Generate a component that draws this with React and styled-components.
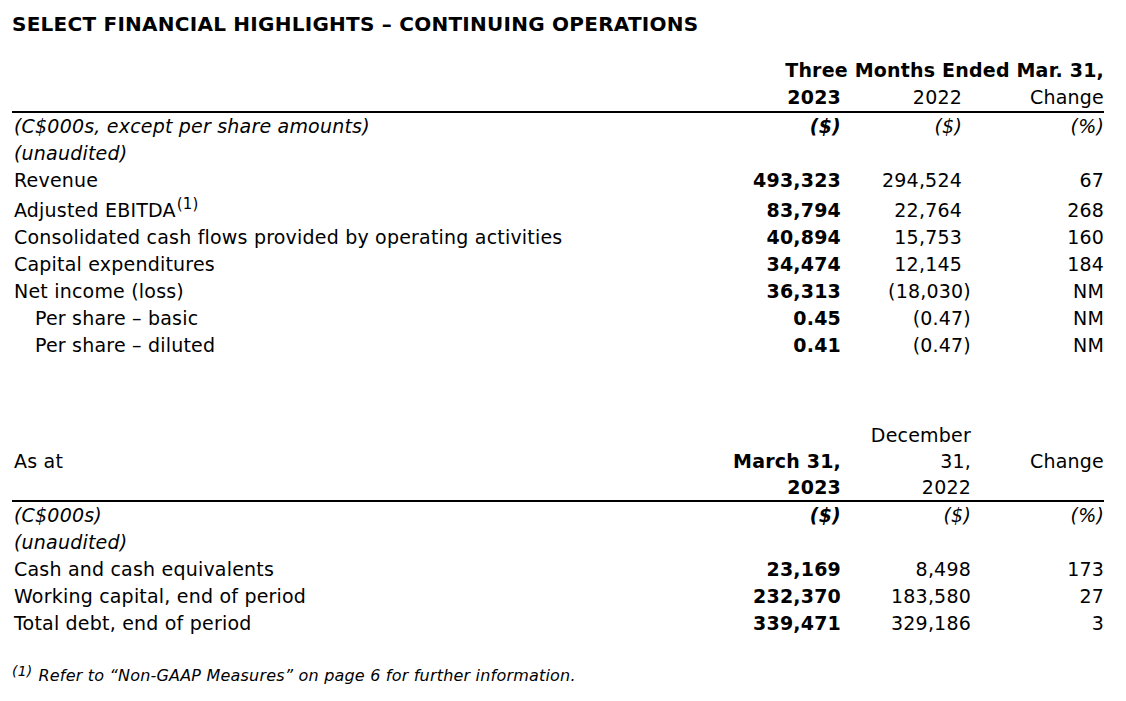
import React from 'react'
import styled, { createGlobalStyle } from 'styled-components'

const GlobalStyle = createGlobalStyle`
    body {
        margin: 0;
        background: #ffffff;
        color: #000000;
        font-family: "DejaVu Sans", Verdana, sans-serif;
    }
`

const Page = styled.div`
    width: 1126px;
    padding: 12px 22px 0 12px;
    box-sizing: border-box;
`

const Title = styled.h1`
    margin: 0;
    font-size: 20px;
    line-height: 24px;
    letter-spacing: 0.25px;
    font-weight: bold;
`

const Table = styled.table`
    width: 1092px;
    table-layout: fixed;
    border-collapse: collapse;
    font-size: 19px;
    line-height: 27px;
    letter-spacing: 0.2px;
    margin-top: ${p => p.$top}px;
`

const Cell = styled.td`
    padding: 0 ${p => (p.$hang ? 9 : 0)}px 0 ${p => (p.$indent ? 23 : 2)}px;
    text-align: ${p => (p.$num ? 'right' : 'left')};
    font-weight: ${p => (p.$bold ? 'bold' : 'normal')};
    font-style: ${p => (p.$italic ? 'italic' : 'normal')};
    vertical-align: ${p => p.$valign || 'middle'};
    white-space: nowrap;
`

const Row = styled.tr`
    height: ${p => (p.$tall ? 30 : 27)}px;
    & > td {
        vertical-align: bottom;
    }
`

const HeadRow = styled.tr`
    line-height: ${p => p.$lh || 27}px;
    & > td {
        border-bottom: ${p => (p.$rule ? '2px solid #000' : 'none')};
    }
`

const Sup = styled.sup`
    font-size: 15px;
    line-height: 0;
    vertical-align: 8px;
    margin-left: 1px;
`

const Footnote = styled.p`
    margin: 24px 0 0 0;
    font-size: 16px;
    line-height: 20px;
    letter-spacing: 0.2px;
    font-style: italic;
`

const FootMark = styled.span`
    font-size: 14px;
    vertical-align: 5px;
    margin-right: 6px;
`

const Cols = () => (
    <colgroup>
        <col style={{ width: 688 }} />
        <col style={{ width: 141 }} />
        <col style={{ width: 130 }} />
        <col style={{ width: 133 }} />
    </colgroup>
)

const quarterRows = [
    { label: 'Revenue', cur: '493,323', prev: '294,524', change: '67' },
    { label: 'Adjusted EBITDA', sup: true, cur: '83,794', prev: '22,764', change: '268' },
    { label: 'Consolidated cash flows provided by operating activities', cur: '40,894', prev: '15,753', change: '160' },
    { label: 'Capital expenditures', cur: '34,474', prev: '12,145', change: '184' },
    { label: 'Net income (loss)', cur: '36,313', prev: '(18,030)', change: 'NM' },
    { label: 'Per share – basic', indent: true, cur: '0.45', prev: '(0.47)', change: 'NM' },
    { label: 'Per share – diluted', indent: true, cur: '0.41', prev: '(0.47)', change: 'NM' },
]

const balanceRows = [
    { label: 'Cash and cash equivalents', cur: '23,169', prev: '8,498', change: '173' },
    { label: 'Working capital, end of period', cur: '232,370', prev: '183,580', change: '27' },
    { label: 'Total debt, end of period', cur: '339,471', prev: '329,186', change: '3' },
]

const App = () => {
    return (
        <Page>
            <GlobalStyle />
            <Title>SELECT FINANCIAL HIGHLIGHTS – CONTINUING OPERATIONS</Title>

            <Table $top={21}>
                <Cols />
                <tbody>
                    <tr>
                        <Cell />
                        <Cell colSpan={3} $num $bold>Three Months Ended Mar. 31,</Cell>
                    </tr>
                    <HeadRow $rule>
                        <Cell />
                        <Cell $num $bold>2023</Cell>
                        <Cell $num $hang>2022</Cell>
                        <Cell $num>Change</Cell>
                    </HeadRow>
                    <tr>
                        <Cell $italic>(C$000s, except per share amounts)</Cell>
                        <Cell $num $bold $italic>($)</Cell>
                        <Cell $num $italic $hang>($)</Cell>
                        <Cell $num $italic>(%)</Cell>
                    </tr>
                    <tr>
                        <Cell $italic>(unaudited)</Cell>
                        <Cell />
                        <Cell />
                        <Cell />
                    </tr>
                    {quarterRows.map(r => (
                        <Row key={r.label} $tall={r.sup}>
                            <Cell $indent={r.indent}>
                                {r.label}
                                {r.sup && <Sup>(1)</Sup>}
                            </Cell>
                            <Cell $num $bold>{r.cur}</Cell>
                            <Cell $num $hang={!r.prev.startsWith('(')}>{r.prev}</Cell>
                            <Cell $num>{r.change}</Cell>
                        </Row>
                    ))}
                </tbody>
            </Table>

            <Table $top={63}>
                <Cols />
                <tbody>
                    <HeadRow $rule $lh={26}>
                        <Cell>As at</Cell>
                        <Cell $num $bold $valign="bottom">March 31,<br />2023</Cell>
                        <Cell $num>December<br />31,<br />2022</Cell>
                        <Cell $num>Change</Cell>
                    </HeadRow>
                    <tr>
                        <Cell $italic>(C$000s)</Cell>
                        <Cell $num $bold $italic>($)</Cell>
                        <Cell $num $italic>($)</Cell>
                        <Cell $num $italic>(%)</Cell>
                    </tr>
                    <tr>
                        <Cell $italic>(unaudited)</Cell>
                        <Cell />
                        <Cell />
                        <Cell />
                    </tr>
                    {balanceRows.map(r => (
                        <Row key={r.label}>
                            <Cell>{r.label}</Cell>
                            <Cell $num $bold>{r.cur}</Cell>
                            <Cell $num>{r.prev}</Cell>
                            <Cell $num>{r.change}</Cell>
                        </Row>
                    ))}
                </tbody>
            </Table>

            <Footnote>
                <FootMark>(1)</FootMark>
                Refer to “Non-GAAP Measures” on page 6 for further information.
            </Footnote>
        </Page>
    )
}

export default App
